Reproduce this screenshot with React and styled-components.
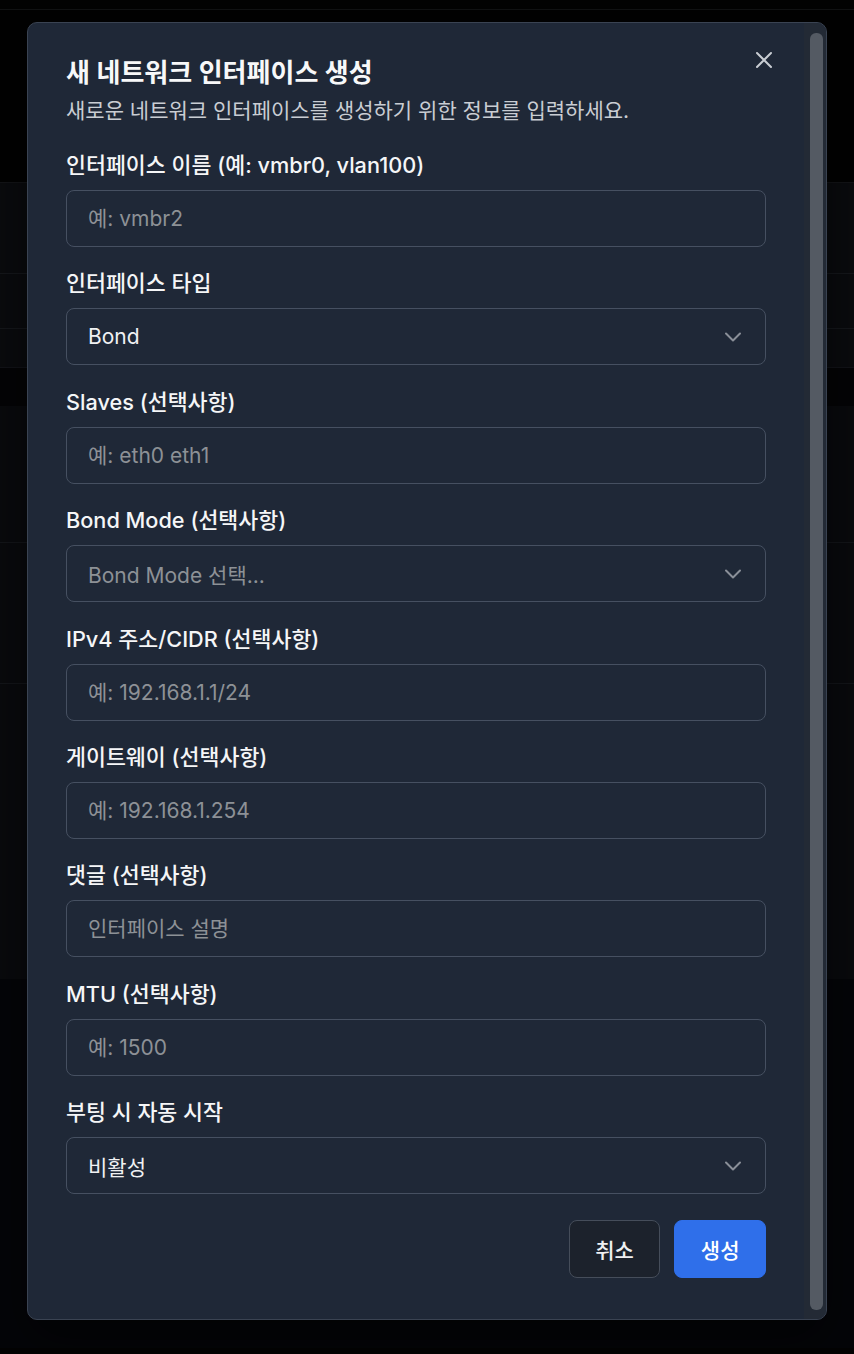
import React from "react";
import styled, { createGlobalStyle } from "styled-components";

const Global = createGlobalStyle`
  html, body { margin: 0; padding: 0; background: #030303; }
  body {
    font-family: "Inter", "Noto Sans CJK KR", sans-serif;
    -webkit-font-smoothing: antialiased;
  }
  * { box-sizing: border-box; }
`;

const Page = styled.div`
  width: 854px;
  height: 1354px;
  position: relative;
  overflow: hidden;
  background: #030303;
`;

const Backdrop = styled.div`
  display: flex;
  flex-direction: column;
`;

const Stripe = styled.div`
  height: ${(p) => p.$h}px;
  background: ${(p) => p.$bg};
  border-bottom: ${(p) => (p.$line ? "1px solid " + p.$line : "none")};
`;

const Overlay = styled.div`
  position: absolute;
  inset: 0;
  display: flex;
  justify-content: center;
  align-items: flex-start;
  padding-top: 22px;
`;

const Modal = styled.div`
  position: relative;
  width: 800px;
  height: 1298px;
  background: #1f2837;
  border: 1px solid #3a4352;
  border-radius: 10px;
  box-shadow: 0 20px 50px rgba(0, 0, 0, 0.5);
  display: flex;
  overflow: hidden;
`;

const Content = styled.div`
  flex: 1;
  padding: 34px 38px 0 38px;
  display: flex;
  flex-direction: column;
`;

const ScrollTrack = styled.div`
  width: 22px;
  background: #232a35;
  display: flex;
  padding: 10px 3px 9px 6px;
`;

const ScrollThumb = styled.div`
  flex: 1;
  background: #545a63;
  border-radius: 6px;
`;

const CloseButton = styled.button`
  position: absolute;
  top: 25px;
  right: 50px;
  width: 24px;
  height: 24px;
  padding: 0;
  border: none;
  background: transparent;
  display: flex;
  align-items: center;
  justify-content: center;
  color: #c9cdd3;
  cursor: pointer;
`;

const Header = styled.div`
  display: flex;
  flex-direction: column;
  gap: 8px;
  margin-bottom: 27px;
`;

const Title = styled.h2`
  margin: 0;
  font-size: 26px;
  line-height: 32px;
  font-weight: 600;
  color: #f7f8f9;
`;

const Description = styled.p`
  margin: 0;
  font-size: 21px;
  line-height: 28px;
  font-weight: 400;
  color: #c9cdd3;
`;

const Form = styled.div`
  display: flex;
  flex-direction: column;
  gap: 23.4px;
`;

const Field = styled.div`
  display: flex;
  flex-direction: column;
  gap: 12px;
`;

const Label = styled.label`
  font-size: 21.7px;
  line-height: 26px;
  font-weight: 500;
  color: #f5f6f7;
`;

const Input = styled.input`
  height: 57px;
  width: 100%;
  border: 1px solid #465061;
  border-radius: 8px;
  background: transparent;
  padding: 0 21px;
  font-family: inherit;
  font-size: 21px;
  color: #f0f1f3;
  outline: none;
  &::placeholder {
    color: #8d9196;
  }
`;

const SelectBox = styled.button`
  height: 57px;
  width: 100%;
  border: 1px solid #465061;
  border-radius: 8px;
  background: transparent;
  padding: 0 24px 0 21px;
  display: flex;
  align-items: center;
  justify-content: space-between;
  font-family: inherit;
  font-size: 21px;
  color: ${(p) => (p.$placeholder ? "#8d9196" : "#f0f1f3")};
  cursor: pointer;
`;

const Chevron = styled.svg`
  width: 16px;
  height: 10px;
  color: #8a8f98;
  flex-shrink: 0;
`;

const Footer = styled.div`
  display: flex;
  justify-content: flex-end;
  gap: 14px;
  margin-top: 25.5px;
`;

const Button = styled.button`
  height: 58px;
  padding: 0 25.5px;
  border-radius: 8px;
  font-family: inherit;
  font-size: 21px;
  font-weight: 500;
  cursor: pointer;
  border: 1px solid ${(p) => (p.$primary ? "#2f6fea" : "#454d5a")};
  background: ${(p) => (p.$primary ? "#2f6fea" : "#1c222c")};
  color: ${(p) => (p.$primary ? "#ffffff" : "#eef0f2")};
`;

const ChevronDown = () => (
  <Chevron viewBox="0 0 16 10" fill="none">
    <path
      d="M1 1.5 L8 8.5 L15 1.5"
      stroke="currentColor"
      strokeWidth="2"
      strokeLinecap="round"
      strokeLinejoin="round"
    />
  </Chevron>
);

const XIcon = () => (
  <svg width="24" height="24" viewBox="0 0 24 24" fill="none">
    <path
      d="M5 5 L19 19 M19 5 L5 19"
      stroke="currentColor"
      strokeWidth="2"
      strokeLinecap="round"
    />
  </svg>
);

const stripes = [
  { h: 10, bg: "#030303", line: "#111213" },
  { h: 172, bg: "#020202" },
  { h: 1, bg: "#131417" },
  { h: 91, bg: "#0a0b0e", line: "#15171b" },
  { h: 55, bg: "#0a0b0e", line: "#15171b" },
  { h: 39, bg: "#0a0b0e", line: "#121318" },
  { h: 38, bg: "#040406" },
  { h: 137, bg: "#090a0d", line: "#131519" },
  { h: 141, bg: "#090a0d", line: "#131519" },
  { h: 295, bg: "#090a0d" },
  { h: 369, bg: "#040508" },
];

const fields = [
  { label: "인터페이스 이름 (예: vmbr0, vlan100)", type: "input", ph: "예: vmbr2" },
  { label: "인터페이스 타입", type: "select", value: "Bond" },
  { label: "Slaves (선택사항)", type: "input", ph: "예: eth0 eth1" },
  { label: "Bond Mode (선택사항)", type: "select", ph: "Bond Mode 선택..." },
  { label: "IPv4 주소/CIDR (선택사항)", type: "input", ph: "예: 192.168.1.1/24" },
  { label: "게이트웨이 (선택사항)", type: "input", ph: "예: 192.168.1.254" },
  { label: "댓글 (선택사항)", type: "input", ph: "인터페이스 설명" },
  { label: "MTU (선택사항)", type: "input", ph: "예: 1500" },
  { label: "부팅 시 자동 시작", type: "select", value: "비활성" },
];

export default function App() {
  return (
    <Page>
      <Global />
      <Backdrop>
        {stripes.map((s, i) => (
          <Stripe key={i} $h={s.h} $bg={s.bg} $line={s.line} />
        ))}
      </Backdrop>
      <Overlay>
        <Modal role="dialog">
          <Content>
            <Header>
              <Title>새 네트워크 인터페이스 생성</Title>
              <Description>
                새로운 네트워크 인터페이스를 생성하기 위한 정보를 입력하세요.
              </Description>
            </Header>
            <Form>
              {fields.map((f, i) => (
                <Field key={i}>
                  <Label>{f.label}</Label>
                  {f.type === "input" ? (
                    <Input placeholder={f.ph} />
                  ) : (
                    <SelectBox type="button" $placeholder={!f.value}>
                      <span>{f.value || f.ph}</span>
                      <ChevronDown />
                    </SelectBox>
                  )}
                </Field>
              ))}
            </Form>
            <Footer>
              <Button type="button">취소</Button>
              <Button type="button" $primary>
                생성
              </Button>
            </Footer>
          </Content>
          <ScrollTrack>
            <ScrollThumb />
          </ScrollTrack>
          <CloseButton type="button" aria-label="닫기">
            <XIcon />
          </CloseButton>
        </Modal>
      </Overlay>
    </Page>
  );
}
